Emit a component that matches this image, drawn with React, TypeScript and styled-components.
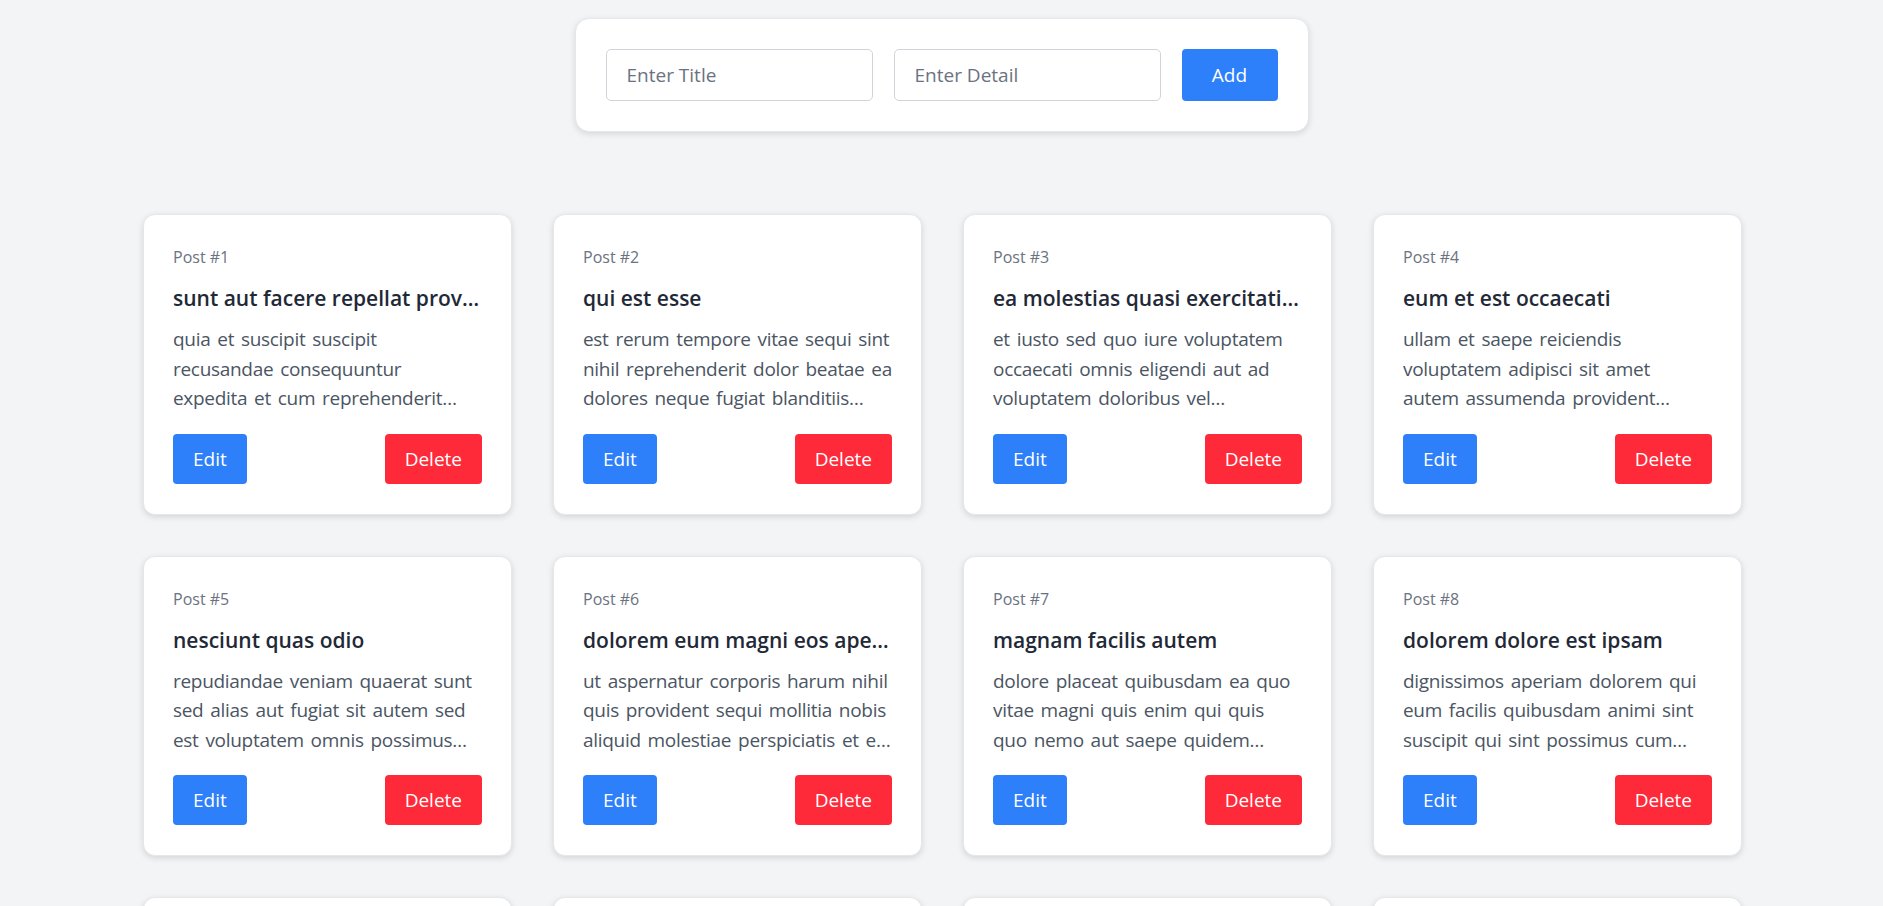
import React from "react";
import styled, { createGlobalStyle } from "styled-components";

const GlobalStyle = createGlobalStyle`
  * { box-sizing: border-box; }
  html, body { margin: 0; padding: 0; }
  body {
    background: #f3f4f6;
    font-family: "Open Sans", "Noto Sans", "Liberation Sans", sans-serif;
    color: #1f2937;
  }
`;

const Page = styled.main`
  padding-top: 18px;
  min-height: 100vh;
`;

const Form = styled.form`
  display: flex;
  align-items: center;
  gap: 21px;
  width: fit-content;
  margin: 0 auto 82px;
  padding: 30px;
  background: #ffffff;
  border: 1px solid #e5e7eb;
  border-radius: 14px;
  box-shadow: 0 2px 6px rgba(0, 0, 0, 0.12);
`;

const Input = styled.input`
  width: 267px;
  height: 52px;
  padding: 12px 20px;
  font-family: inherit;
  font-size: 19px;
  color: #1f2937;
  background: #fff;
  border: 1px solid #d1d5db;
  border-radius: 5px;
  outline: none;
  &::placeholder { color: #6b7280; }
`;

const Button = styled.button<{ $variant: "blue" | "red" }>`
  padding: 12px 20px;
  font-family: inherit;
  font-size: 19px;
  line-height: 26px;
  color: #ffffff;
  background: ${(p) => (p.$variant === "blue" ? "#2d7ffa" : "#ff2a39")};
  border: none;
  border-radius: 4px;
  cursor: pointer;
`;

const AddButton = styled(Button)`
  width: 96px;
  height: 52px;
  padding: 0;
`;

const Grid = styled.section`
  display: grid;
  grid-template-columns: repeat(4, 369px);
  gap: 41px;
  justify-content: center;
  padding-left: 2px;
`;

const Card = styled.article`
  display: flex;
  flex-direction: column;
  padding: 29px 29px 30px;
  background: #ffffff;
  border: 1px solid #e5e7eb;
  border-radius: 12px;
  box-shadow: 0 2px 6px rgba(0, 0, 0, 0.13);
  min-width: 0;
`;

const PostId = styled.div`
  font-size: 16px;
  line-height: 26px;
  color: #6b7280;
  margin-bottom: 13px;
`;

const Title = styled.h2`
  margin: 0 0 12px;
  font-size: 21px;
  line-height: 30px;
  font-weight: 600;
  color: #1f2937;
  white-space: nowrap;
  overflow: hidden;
  text-overflow: ellipsis;
`;

const Body = styled.p`
  margin: 0 0 20px;
  font-size: 19px;
  line-height: 29.5px;
  letter-spacing: -0.3px;
  word-spacing: 2.2px;
  color: #4b5563;
  display: -webkit-box;
  -webkit-line-clamp: 3;
  -webkit-box-orient: vertical;
  overflow: hidden;
`;

const Actions = styled.div`
  display: flex;
  justify-content: space-between;
`;

const posts = [
  { id: 1, title: "sunt aut facere repellat provident occaecati excepturi optio reprehenderit", body: "quia et suscipit suscipit recusandae consequuntur expedita et cum reprehenderit molestiae ut ut quas totam nostrum rerum est autem sunt rem eveniet architecto" },
  { id: 2, title: "qui est esse", body: "est rerum tempore vitae sequi sint nihil reprehenderit dolor beatae ea dolores neque fugiat blanditiis voluptate porro vel nihil molestiae ut reiciendis qui aperiam non debitis possimus qui neque nisi nulla" },
  { id: 3, title: "ea molestias quasi exercitationem repellat qui ipsa sit aut", body: "et iusto sed quo iure voluptatem occaecati omnis eligendi aut ad voluptatem doloribus vel accusantium quis pariatur molestiae porro eius odio et labore et velit aut" },
  { id: 4, title: "eum et est occaecati", body: "ullam et saepe reiciendis voluptatem adipisci sit amet autem assumenda provident rerum culpa quis hic commodi nesciunt rem tenetur doloremque ipsam iure quis sunt voluptatem rerum illo velit" },
  { id: 5, title: "nesciunt quas odio", body: "repudiandae veniam quaerat sunt sed alias aut fugiat sit autem sed est voluptatem omnis possimus esse voluptatibus quis est aut tenetur dolor neque" },
  { id: 6, title: "dolorem eum magni eos aperiam quia", body: "ut aspernatur corporis harum nihil quis provident sequi mollitia nobis aliquid molestiae perspiciatis et ea nemo ab reprehenderit accusantium quas voluptate dolores velit et doloremque molestiae" },
  { id: 7, title: "magnam facilis autem", body: "dolore placeat quibusdam ea quo vitae magni quis enim qui quis quo nemo aut saepe quidem repellat excepturi ut quia sunt ut sequi eos ea sed quas" },
  { id: 8, title: "dolorem dolore est ipsam", body: "dignissimos aperiam dolorem qui eum facilis quibusdam animi sint suscipit qui sint possimus cum quaerat magni maiores excepturi ipsam ut commodi dolor voluptatum modi aut vitae" },
  { id: 9, title: "nesciunt iure omnis dolorem tempora et accusantium", body: "consectetur animi nesciunt iure dolore enim quia ad veniam autem ut quam aut nobis et est aut quod aut provident voluptas autem voluptas" },
  { id: 10, title: "optio molestias id quia eum", body: "quo et expedita modi cum officia vel magni doloribus qui repudiandae vero nisi sit quos veniam quod sed accusamus veritatis error" },
  { id: 11, title: "et ea vero quia laudantium autem", body: "delectus reiciendis molestiae occaecati non minima eveniet qui voluptatibus accusamus in eum beatae sit vel qui neque voluptates ut commodi qui incidunt ut animi commodi" },
  { id: 12, title: "in quibusdam tempore odit est dolorem", body: "itaque id aut magnam praesentium quia et ea odit et ea voluptas et sapiente quia nihil amet occaecati quia id voluptatem incidunt ea est distinctio odio" },
];

export default function App() {
  return (
    <>
      <GlobalStyle />
      <Page>
        <Form onSubmit={(e) => e.preventDefault()}>
          <Input placeholder="Enter Title" />
          <Input placeholder="Enter Detail" />
          <AddButton $variant="blue" type="submit">Add</AddButton>
        </Form>
        <Grid>
          {posts.map((p) => (
            <Card key={p.id}>
              <PostId>Post #{p.id}</PostId>
              <Title>{p.title}</Title>
              <Body>{p.body}</Body>
              <Actions>
                <Button $variant="blue" type="button">Edit</Button>
                <Button $variant="red" type="button">Delete</Button>
              </Actions>
            </Card>
          ))}
        </Grid>
      </Page>
    </>
  );
}
